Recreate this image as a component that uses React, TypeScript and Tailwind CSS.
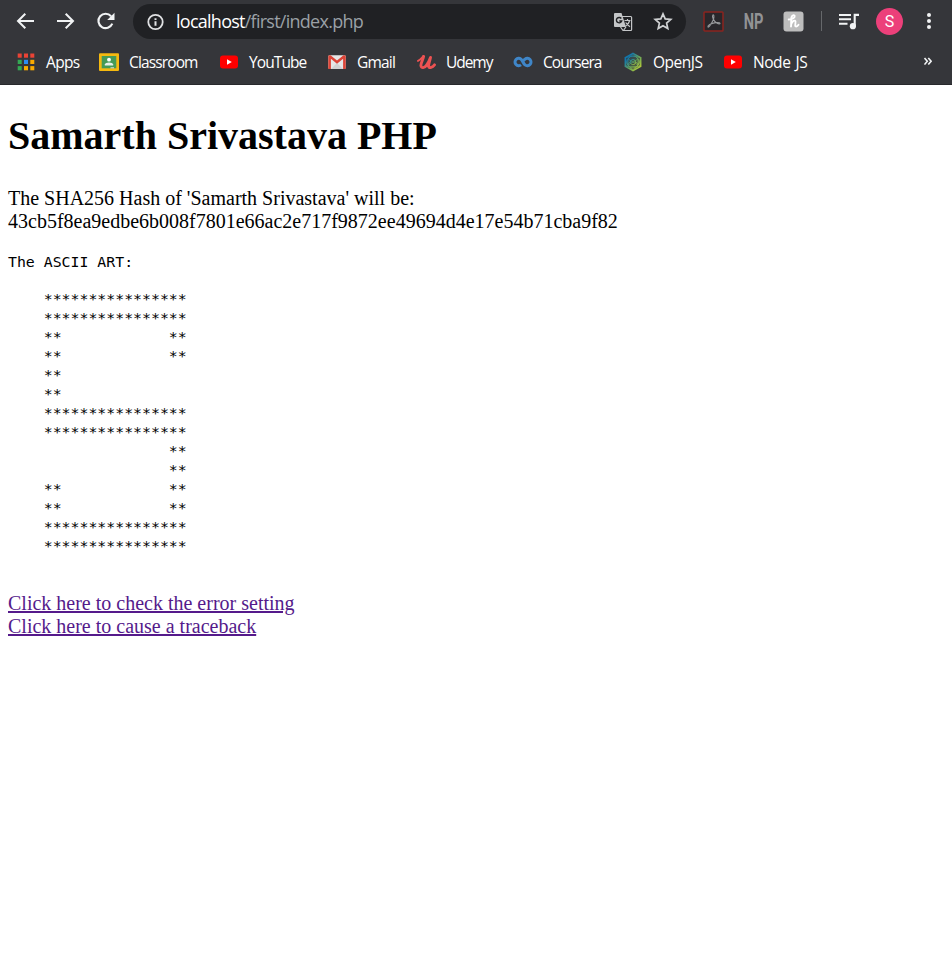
import React from "react";

const ui = "font-['Open_Sans','Noto_Sans',sans-serif]";

const YouTube = () => (
  <svg width="20" height="20" viewBox="0 0 20 20">
    <rect x="1" y="3.5" width="18" height="13" rx="3" fill="#f00" />
    <path d="M8 7.2v5.6l4.8-2.8z" fill="#fff" />
  </svg>
);

const Apps = () => (
  <svg width="20" height="20" viewBox="0 0 20 20">
    {["#ea4335", "#ea4335", "#ea4335", "#34a853", "#2a8cf4", "#f9ab00", "#34a853", "#f9ab00", "#f9ab00"].map((c, i) => (
      <rect key={i} x={1.7 + (i % 3) * 6.3} y={1.5 + Math.floor(i / 3) * 6.3} width="4" height="4.2" fill={c} />
    ))}
  </svg>
);

const Classroom = () => (
  <svg width="20" height="20" viewBox="0 0 20 20">
    <rect x="0" y="1.3" width="20" height="17.7" rx="1" fill="#f5b90f" />
    <rect x="2.7" y="4" width="14.6" height="12.3" fill="#459a57" />
    <circle cx="10" cy="7.7" r="1.9" fill="#fff" />
    <path d="M5.800 13.600v-1c0-1.200 2.200-2 4.200-2s4.200.800 4.200 2v1z" fill="#e5efe7" />
    <path d="M11.5 16.3h3.5v-1h-3.5z" fill="#ddd" />
  </svg>
);

const Gmail = () => (
  <svg width="20" height="20" viewBox="0 0 20 20">
    <rect x="1.3" y="3.2" width="17.4" height="13.8" rx="1.2" fill="#e6e6e6" />
    <path d="M4 17l6-6 6 6z" fill="#d2d2d2" />
    <path d="M1.3 17V4.5q0-1.3 1.3-1.3h.9L10 8.5l6.500-5.300h.9q1.300 0 1.300 1.300V17h-2.600V6.700L10 11.800 3.900 6.700V17z" fill="#dc4437" />
  </svg>
);

const Udemy = () => (
  <svg width="20" height="20" viewBox="0 0 20 20" fill="none" stroke="#ec5252" strokeLinecap="round" strokeLinejoin="round">
    <path d="M2 8.900C4.500 7.800 6 5.700 7.300 4.300" strokeWidth="2" />
    <path d="M7.600 4.500C6.800 8 4.800 11 4.900 13.500c.2 3.200 3.800 2.600 5.900-.6C12.200 10.800 13.500 8 14.500 5.400c-.8 4-2.300 7-1.800 9.200.5 2 3.700.9 5.800-1.800" strokeWidth="2.900" />
  </svg>
);

const Coursera = () => (
  <svg width="20" height="20" viewBox="0 0 20 20" fill="none" stroke="#3f86c8" strokeWidth="3">
    <path d="M8 12.900A3.700 3.700 0 1 1 8 7.100C9.800 8.600 10.200 11.500 12 12.900A3.700 3.700 0 1 0 12 7.100L10.600 8.400" />
  </svg>
);

const OpenJS = () => (
  <svg width="20" height="20" viewBox="0 0 20 20">
    <defs>
      <linearGradient id="ojs" x1="0" y1="0" x2="1" y2="1">
        <stop offset=".2" stopColor="#1177ad" />
        <stop offset=".55" stopColor="#63a35d" />
        <stop offset="1" stopColor="#c9d62f" />
      </linearGradient>
    </defs>
    <path d="M10 1.300l7.700 4.300v8.800L10 18.700l-7.700-4.300V5.600z" fill="url(#ojs)" opacity=".25" />
    <g fill="none" stroke="url(#ojs)" strokeWidth=".8">
      <path d="M10 1.300l7.700 4.300v8.800L10 18.700l-7.700-4.300V5.600z" strokeWidth="1.500" />
      <circle cx="10" cy="10" r="6" />
      <circle cx="10" cy="10" r="2.700" />
      <path d="M2.300 5.600L10 4l7.700 1.600L16 12l-6 6.700L4 12zM10 1.300L5 7v6l5 5.700 5-5.700V7zM2.300 14.400L10 7.300l7.700 7.100zM5 7l10 6M15 7L5 13" />
    </g>
  </svg>
);

const bookmarks = [
  { name: "Apps", box: "w-[83px]", text: "tracking-[-0.65px]", icon: <Apps /> },
  { name: "Classroom", box: "w-[120px]", text: "tracking-[-0.87px]", icon: <Classroom /> },
  { name: "YouTube", box: "w-[108px]", text: "tracking-[-0.9px]", icon: <YouTube /> },
  { name: "Gmail", box: "w-[89px]", text: "tracking-[-0.8px]", icon: <Gmail /> },
  { name: "Udemy", box: "w-[97px]", text: "tracking-[-1.05px]", icon: <Udemy /> },
  { name: "Coursera", box: "w-[110px]", text: "tracking-[-0.93px]", icon: <Coursera /> },
  { name: "OpenJS", box: "w-[100px]", text: "tracking-[-0.5px]", icon: <OpenJS /> },
  { name: "Node JS", box: "w-[100px]", text: "tracking-[-0.45px] [word-spacing:1.5px]", icon: <YouTube /> },
];

const full = "    ****************";
const ends = "    **            **";
const left = "    **";
const right = "                  **";
const art = [full, full, ends, ends, left, left, full, full, right, right, ends, ends, full, full].join("\n");

function Toolbar() {
  return (
    <div className="flex h-[43px] items-center text-[#f1f3f4]">
      <svg className="ml-[15px] -mt-px" width="20" height="20" viewBox="0 0 20 20" fill="none" stroke="currentColor" strokeWidth="2">
        <path d="M19 10H3.500M10.300 2.700L3 10l7.300 7.300" />
      </svg>
      <svg className="ml-[20px] -mt-px" width="20" height="20" viewBox="0 0 20 20" fill="none" stroke="currentColor" strokeWidth="2">
        <path d="M2 10h15.500M10.700 2.700L18 10l-7.300 7.300" />
      </svg>
      <svg className="ml-[20px] -mt-px" width="20" height="20" viewBox="0 0 20 20" fill="none" stroke="currentColor" strokeWidth="2.100">
        <path d="M17.300 12.600A7.200 7.200 0 1 1 16.100 5.200" />
        <path d="M19.500 1.700V9h-7.300z" fill="currentColor" stroke="none" />
      </svg>
      <div className="ml-[18px] flex h-[35px] w-[553px] items-center rounded-full bg-[#202124] pl-[13px] pr-[13px]">
        <svg width="18" height="18" viewBox="0 0 18 18" fill="none" stroke="#e0e1e3" strokeWidth="1.800">
          <circle cx="9.500" cy="9" r="7.200" />
          <path d="M9.500 8.200v4.600M9.500 5.200v1.800" strokeWidth="2" />
        </svg>
        <span className={`${ui} ml-[12px] -mt-px text-[18px] leading-[34px] tracking-[-0.74px] whitespace-nowrap text-[#9aa0a6]`}>
          <span className="text-white">localhost</span>/first/index.php
        </span>
        <svg className="ml-auto" width="20" height="20" viewBox="0 0 20 20">
          <path d="M9 4.500h8.700q.9 0 .9.900v12.200q0 .9-.9.900H10L7.500 15" fill="none" stroke="#c4c6c8" strokeWidth="1.200" />
          <path d="M2 1h6.500l4.500 14H2q-1 0-1-1V2q0-1 1-1z" fill="#c4c6c8" />
          <path d="M8.300 6.500A2.700 2.700 0 1 0 8.700 9H6.300" fill="none" stroke="#202124" strokeWidth="1.400" />
          <path d="M11.500 8.500h6M14.500 7v1.500M16.700 8.500q-.7 3-4 5.500M12.700 10.500q1.500 2.500 4.300 4.300M10.700 18l2.300-3" fill="none" stroke="#c4c6c8" strokeWidth="1.200" />
        </svg>
        <svg className="ml-[20px] -mt-px" width="20" height="20" viewBox="0 0 20 20" fill="none" stroke="#d0d2d4" strokeWidth="1.700">
          <path d="M10 2.800l2.200 5.100 5.600.5-4.200 3.700 1.200 5.500-4.800-2.900-4.800 2.900 1.200-5.500-4.200-3.700 5.600-.5z" />
        </svg>
      </div>
      <svg className="ml-[17px]" width="21" height="21" viewBox="0 0 21 21">
        <rect x="1" y="1" width="19" height="19" rx=".8" fill="#29272b" stroke="#8b241f" strokeWidth="1.500" />
        <path d="M9.800 4c-1 1.500.8 6.500 4.300 8.300 2.500 1.300 3.700.3 2.300-.5-2.500-.8-7.400.3-10 2-2.500 1.700-1.500 3.500.3 1.200 2-2.800 4.600-7.300 4.200-10-.1-1.200-.7-1.500-1.100-1z" fill="none" stroke="#97989b" strokeWidth="1.100" />
      </svg>
      <span className="ml-[20px] inline-flex w-[20px] justify-center">
        <span className="scale-x-[.68] font-['Roboto',sans-serif] text-[21.5px] leading-[20px] font-bold text-[#929395]">NP</span>
      </span>
      <svg className="ml-[19px]" width="21" height="21" viewBox="0 0 21 21">
        <rect x=".5" y=".5" width="20" height="20" rx="3" fill="#bdbdbd" />
        <path d="M5.700 8.500C9 8.300 12 7 11.700 5 11.300 3.500 8.900 4.200 8.400 6.500 7.800 9.500 8.500 13 8 15.500M8.200 13.200C9.300 10.500 10.800 9.200 12 9.700c1.600.800-.600 4.500.500 5.500.900.700 2.100-.200 3-1.500" fill="none" stroke="#fff" strokeWidth="1.900" strokeLinecap="round" />
      </svg>
      <div className="ml-[17px] -mt-px h-[20px] w-px bg-[#66686b]" />
      <svg className="ml-[17px]" width="20" height="18" viewBox="0 0 20 18">
        <path d="M0 2h12M0 6.300h12M0 10.700h8.500" stroke="currentColor" strokeWidth="2" />
        <path d="M15.700 13V1.900H20" fill="none" stroke="currentColor" strokeWidth="2.100" />
        <circle cx="13.900" cy="13.200" r="3.100" fill="currentColor" />
      </svg>
      <div className="ml-[17px] flex size-[27px] items-center justify-center rounded-full bg-[#ec407a] font-['Roboto',sans-serif] text-[16px] leading-none text-white">S</div>
      <svg className="ml-[16px] -mt-px" width="20" height="20" viewBox="0 0 20 20" fill="currentColor">
        <circle cx="10" cy="4" r="2" />
        <circle cx="10" cy="10" r="2" />
        <circle cx="10" cy="16" r="2" />
      </svg>
    </div>
  );
}

export default function App() {
  return (
    <div className="h-[968px] w-[952px] overflow-hidden bg-white">
      <header className="h-[85px] border-b border-[#28292c] bg-[#35363a]">
        <Toolbar />
        <nav className="flex h-[38px] items-center pl-[16px] text-white">
          {bookmarks.map((b) => (
            <div key={b.name} className={`flex shrink-0 items-center gap-[10px] ${b.box}`}>
              {b.icon}
              <span className={`${ui} -mt-px text-[15.500px] leading-[20px] whitespace-nowrap ${b.text}`}>{b.name}</span>
            </div>
          ))}
          <svg className="ml-[101px]" width="8" height="20" viewBox="0 0 8 20" fill="none" stroke="#f1f3f4" strokeWidth="1.600">
            <path d="M.5 6L3.300 9.300.5 12.600M4.300 6L7.100 9.300l-2.800 3.300" />
          </svg>
        </nav>
      </header>
      <main className="px-[8px] font-['Liberation_Serif',serif] text-[20px] leading-[23px] text-black">
        <h1 className="pt-[28px] text-[40px] leading-[46px] font-bold">Samarth Srivastava PHP</h1>
        <p className="mt-[28px]">
          The SHA256 Hash of 'Samarth Srivastava' will be:
          <br />
          43cb5f8ea9edbe6b008f7801e66ac2e717f9872ee49694d4e17e54b71cba9f82
        </p>
        <div className="mt-[20px] font-['DejaVu_Sans_Mono',monospace] text-[14.85px] leading-[19px]">
          <pre className="font-[inherit]">The ASCII ART:</pre>
          <pre className="mt-[18px] font-[inherit]">{art}</pre>
        </div>
        <div className="mt-[36px] flex flex-col items-start text-[#551a8b]">
          <a className="underline decoration-2 underline-offset-1" href="#error">Click here to check the error setting</a>
          <a className="underline decoration-2 underline-offset-1" href="#traceback">Click here to cause a traceback</a>
        </div>
      </main>
    </div>
  );
}
